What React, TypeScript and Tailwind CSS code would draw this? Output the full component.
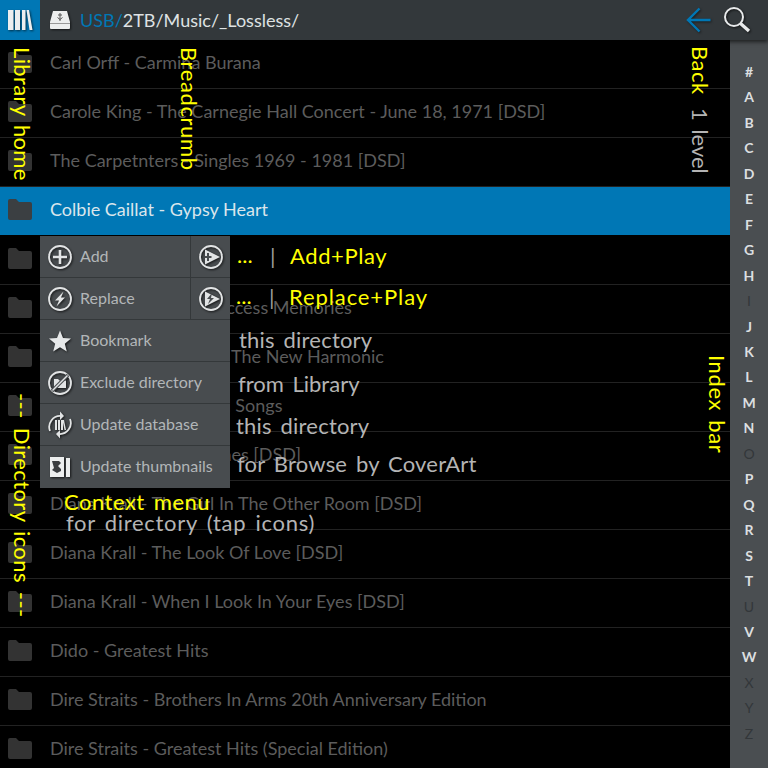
import React from "react";

const rows = [
  "Carl Orff - Carmina Burana",
  "Carole King - The Carnegie Hall Concert - June 18, 1971 [DSD]",
  "The Carpetnters - Singles 1969 - 1981 [DSD]",
  "Colbie Caillat - Gypsy Heart",
  "Coldplay - Parachutes",
  "Daft Punk - Random Access Memories",
  "Dave Brubeck Sextet - The New Harmonic",
  "David Byrne - Selected Songs",
  "Diana Krall - Love Scenes [DSD]",
  "Diana Krall - The Girl In The Other Room [DSD]",
  "Diana Krall - The Look Of Love [DSD]",
  "Diana Krall - When I Look In Your Eyes [DSD]",
  "Dido - Greatest Hits",
  "Dire Straits - Brothers In Arms 20th Anniversary Edition",
  "Dire Straits - Greatest Hits (Special Edition)",
];

const letters = "#ABCDEFGHIJKLMNOPQRSTUVWXYZ".split("");
const dimLetters = ["I", "O", "U", "X", "Y", "Z"];

function Folder({ color }: { color: string }) {
  return (
    <svg width="24" height="21" viewBox="0 0 24 21" className="shrink-0">
      <path d="M0 2q0-2 2-2h6l3 3h11q2 0 2 2v14q0 2-2 2H2q-2 0-2-2z" fill={color} />
    </svg>
  );
}

function Ring({ children }: { children?: React.ReactNode }) {
  return (
    <svg width="26" height="26" viewBox="0 0 26 26" className="shrink-0 drop-shadow-[1px_1px_1px_rgba(0,0,0,0.7)]">
      <circle cx="13" cy="13" r="11" fill="none" stroke="#e2e4e5" strokeWidth="1.8" />
      {children}
    </svg>
  );
}

const plus = <path d="M13 6v14M6 13h14" stroke="#e2e4e5" strokeWidth="2.6" fill="none" />;
const bolt = <path d="M16.5 5.5 8 14.5h4l-2.5 6 8.5-9h-4z" fill="#e2e4e5" />;

function MenuRow({ icon, label, side, last }: { icon: React.ReactNode; label: string; side?: React.ReactNode; last?: boolean }) {
  return (
    <div className={`h-[42px] flex items-center ${last ? "" : "border-b border-[#34383a]"}`}>
      <div className="w-10 flex justify-center shrink-0">{icon}</div>
      <div className="flex-1 text-[16px] text-[#b2b6b8] pb-[2px]">{label}</div>
      {side && <div className="w-10 h-full flex items-center justify-center border-l border-[#34383a]">{side}</div>}
    </div>
  );
}

const notes: { text: string; pos: string; color: string }[] = [
  { text: "...", pos: "left-[237px] top-[243px]", color: "text-[#ffff00]" },
  { text: "|", pos: "left-[270px] top-[244px]", color: "text-[#9a9a9a]" },
  { text: "Add+Play", pos: "left-[290px] top-[244px] tracking-[0.6px]", color: "text-[#ffff00]" },
  { text: "...", pos: "left-[236px] top-[284px]", color: "text-[#ffff00]" },
  { text: "|", pos: "left-[269px] top-[285px]", color: "text-[#9a9a9a]" },
  { text: "Replace+Play", pos: "left-[289px] top-[285px] tracking-[0.9px]", color: "text-[#ffff00]" },
  { text: "this directory", pos: "left-[239px] top-[328px] tracking-[0.2px]", color: "text-[#b4b4b4]" },
  { text: "from Library", pos: "left-[238px] top-[372px]", color: "text-[#b4b4b4]" },
  { text: "this directory", pos: "left-[236px] top-[414px] tracking-[0.2px]", color: "text-[#b4b4b4]" },
  { text: "for Browse by CoverArt", pos: "left-[237px] top-[452px] tracking-[0.2px]", color: "text-[#b4b4b4]" },
  { text: "Context menu", pos: "left-[64px] top-[490px] tracking-[0.5px]", color: "text-[#ffff00]" },
  { text: "for directory (tap icons)", pos: "left-[66px] top-[511px] tracking-[0.7px]", color: "text-[#b4b4b4]" },
];

const sideNotes: { text: string; pos: string; color: string }[] = [
  { text: "Library home", pos: "left-[10px] top-[47px] tracking-[0.35px]", color: "text-[#ffff00]" },
  { text: "Breadcrumb", pos: "left-[177px] top-[47px] tracking-[0.6px]", color: "text-[#ffff00]" },
  { text: "Back", pos: "left-[688px] top-[46px] tracking-[0.5px]", color: "text-[#ffff00]" },
  { text: "1 level", pos: "left-[688px] top-[108px]", color: "text-[#b4b4b4]" },
  { text: "Index bar", pos: "left-[705px] top-[355px] tracking-[0.6px]", color: "text-[#ffff00]" },
  { text: "--- Directory icons ---", pos: "left-[10px] top-[393px] tracking-[0.4px]", color: "text-[#ffff00]" },
];

export default function App() {
  return (
    <div className="relative w-[768px] h-[768px] overflow-hidden bg-black font-['Lato',sans-serif]">
      {/* top bar */}
      <div className="relative z-10 h-10 flex items-center bg-[#33383b] shadow-[0_2px_4px_rgba(0,0,0,0.6)]">
        <div className="w-10 h-10 bg-[#0077b5] flex items-center justify-center">
          <svg width="26" height="22" viewBox="0 0 26 22" className="drop-shadow-[1px_1px_1px_rgba(0,0,0,0.6)]">
            <path d="M1 1h5.500v20H1zM8 1h5v20H8zM15 1h3.500v20H15zM19.500 1h2.500l3.500 20h-3z" fill="#eceeef" />
          </svg>
        </div>
        <svg width="22" height="20" viewBox="0 0 22 20" className="ml-[9px] drop-shadow-[1px_1px_1px_rgba(0,0,0,0.6)]">
          <path d="M4 1h14l3 11v6q0 1-1 1H2q-1 0-1-1v-6z" fill="#eceeee" />
          <path d="M11 3v8M9 5h4M8.500 7.500l2.500 2 2.500-2" stroke="#555" strokeWidth="1" fill="none" />
          <path d="M1 13.500h20" stroke="#999" strokeWidth="1" />
        </svg>
        <div className="ml-[9px] text-[18px] text-[#dfe2e3]">
          <span className="text-[#0077b5]">USB/</span>2TB/Music/_Lossless/
        </div>
        <svg width="26" height="26" viewBox="0 0 26 26" className="ml-auto mr-[11px] drop-shadow-[1px_1px_1px_rgba(0,0,0,0.5)]">
          <path d="M24.500 13H3M13.500 1.500 2 13l11.500 11.500" stroke="#0077b5" strokeWidth="2.400" fill="none" />
        </svg>
        <svg width="28" height="28" viewBox="0 0 28 28" className="mr-[17px] drop-shadow-[1px_1px_1px_rgba(0,0,0,0.7)]">
          <circle cx="11" cy="11" r="9" fill="none" stroke="#e8eaeb" strokeWidth="2" />
          <path d="M17.500 17.500 26 25" stroke="#e8eaeb" strokeWidth="3.400" />
        </svg>
      </div>

      <div className="flex h-[728px]">
        {/* directory list */}
        <div className="flex-1 overflow-hidden">
          {rows.map((title, i) => {
            const selected = i === 3;
            return (
              <div
                key={title}
                className={`h-[49px] flex items-center gap-[18px] pl-2 pb-[3px] text-[18px] border-b ${
                  selected ? "bg-[#0077b5] border-black text-[#dbe6ec]" : "border-[#222222] text-[#5c5c5c]"
                }`}
              >
                <Folder color={selected ? "#3b3f42" : "#333333"} />
                <span className="whitespace-nowrap">{title}</span>
              </div>
            );
          })}
        </div>
        {/* index bar */}
        <div className="w-[38px] bg-[#4a4e51] pt-[19px] flex flex-col items-center">
          {letters.map((l) => (
            <div
              key={l}
              className={`h-[25.46px] leading-[25.46px] text-[14px] font-bold ${
                dimLetters.includes(l) ? "text-[#33373a] font-normal" : "text-[#dcdfe0]"
              }`}
            >
              {l}
            </div>
          ))}
        </div>
      </div>

      {/* context menu */}
      <div className="absolute z-20 left-10 top-[236px] w-[190px] bg-[#484c4f]">
        <MenuRow icon={<Ring>{plus}</Ring>} label="Add" side={<Ring><path d="M7 5.500 22 13 7 20.500z" fill="#e2e4e5" /><path d="M10 9v8M6.500 13h7" stroke="#484c4f" strokeWidth="2" /></Ring>} />
        <MenuRow icon={<Ring>{bolt}</Ring>} label="Replace" side={<Ring><path d="M7 5.500 22 13 7 20.500z" fill="#e2e4e5" /><path d="m14 7-5 6h3l-2 5 6-6h-3z" fill="#484c4f" /></Ring>} />
        <MenuRow
          icon={
            <svg width="24" height="24" viewBox="0 0 24 24" className="drop-shadow-[1px_1px_1px_rgba(0,0,0,0.7)]">
              <path d="m12 1.500 3 7.500 8 .6-6.200 5.100 2 7.800L12 18.200l-6.800 4.300 2-7.800L1 9.600 9 9z" fill="#e6e8e9" />
            </svg>
          }
          label="Bookmark"
        />
        <MenuRow
          icon={
            <Ring>
              <path d="M7 9h4l1.500 1.500H19V18H7z" fill="#e2e4e5" />
              <path d="M5 21 21 5" stroke="#484c4f" strokeWidth="3.500" />
              <path d="M5.500 20.500 20.500 5.500" stroke="#e2e4e5" strokeWidth="1.500" />
            </Ring>
          }
          label="Exclude directory"
        />
        <MenuRow
          icon={
            <svg width="26" height="30" viewBox="0 0 26 30" className="drop-shadow-[1px_1px_1px_rgba(0,0,0,0.7)]">
              <path d="M3 21a11 11 0 0 1 11-15M23 9a11 11 0 0 1-11 15" stroke="#e2e4e5" strokeWidth="1.800" fill="none" />
              <path d="m13 1.500 4 4.500-4 4zM13 28.500l-4-4.500 4-4z" fill="#e2e4e5" />
              <path d="M8 10h2v10H8zM11 10h2v10h-2zM14 10h2v10h-2zM17 10l2 10h-1.500l-2-10z" fill="#e2e4e5" />
            </svg>
          }
          label="Update database"
        />
        <MenuRow
          icon={
            <svg width="22" height="22" viewBox="0 0 22 22" className="drop-shadow-[1px_1px_1px_rgba(0,0,0,0.7)]">
              <path d="M1 1h14v20H1z" fill="#eceeee" />
              <path d="M3 5h7l2 2-3 3 3 3v2l-4 2-5-3 2-2z" fill="#3a3d40" />
              <path d="M17 2h4v19h-4z" fill="#eceeee" />
            </svg>
          }
          label="Update thumbnails"
          last
        />
      </div>

      {/* callouts drawn over the screenshot */}
      {notes.map((n) => (
        <div
          key={n.pos}
          className={`absolute z-30 whitespace-pre text-[22px] leading-6 [word-spacing:3px] ${n.pos} ${n.color}`}
        >
          {n.text}
        </div>
      ))}
      {sideNotes.map((n) => (
        <div
          key={n.pos}
          className={`absolute z-30 whitespace-pre text-[22px] leading-6 [word-spacing:3px] [writing-mode:vertical-rl] ${n.pos} ${n.color}`}
        >
          {n.text}
        </div>
      ))}
    </div>
  );
}
